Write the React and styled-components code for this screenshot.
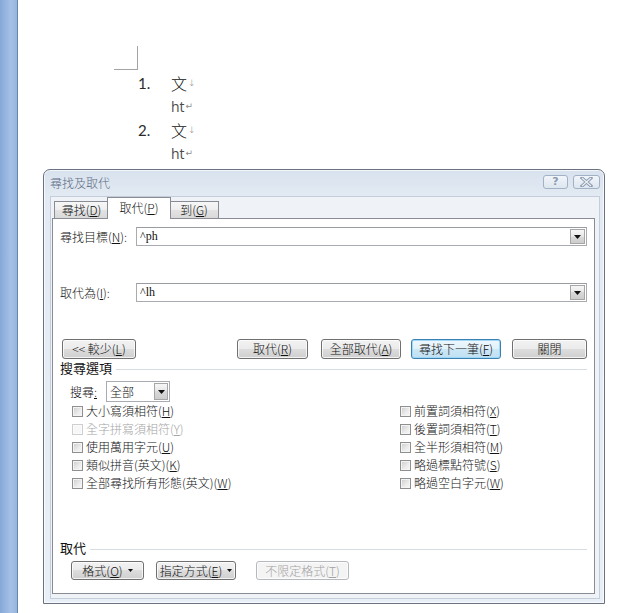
import React from "react";
import styled, { createGlobalStyle } from "styled-components";

const GlobalStyle = createGlobalStyle`
  html, body {
    margin: 0;
    padding: 0;
    background: #fff;
  }
  body {
    font-family: "Noto Sans CJK TC", "Noto Sans", sans-serif;
    font-size: 12px;
    font-weight: 300;
    color: #111;
  }
`;

const Screen = styled.div`
  display: flex;
  width: 626px;
  height: 613px;
  overflow: hidden;
  background: #fff;
`;

const WordRail = styled.div`
  width: 17px;
  flex: none;
  background: linear-gradient(to right, #86a8d8, #a6c1e7 65%, #97b4de);
  border-right: 1px solid #6585b3;
`;

const Page = styled.div`
  flex: 1;
  display: flex;
  flex-direction: column;
  padding-top: 46px;
`;

const CropMark = styled.div`
  margin-left: 96px;
  width: 24px;
  height: 24px;
  box-sizing: border-box;
  border-right: 1px solid #a4a4a4;
  border-bottom: 1px solid #a4a4a4;
`;

const DocList = styled.div`
  margin-top: 1px;
  padding-left: 120px;
  display: grid;
  grid-template-columns: 33px auto;
  grid-auto-rows: 23.5px;
  align-items: center;
`;

const Num = styled.span`
  font-family: Lato, "Liberation Sans", sans-serif;
  font-weight: 400;
  font-size: 15px;
  color: #2b2b2b;
`;

const Body = styled.span`
  display: flex;
  align-items: center;
  font-family: ${(p) => (p.$cjk ? '"Noto Sans CJK TC", sans-serif' : '"Open Sans", "Liberation Sans", sans-serif')};
  font-weight: ${(p) => (p.$cjk ? 300 : 400)};
  font-size: ${(p) => (p.$cjk ? "16px" : "14px")};
  color: ${(p) => (p.$cjk ? "#111" : "#4a4a4a")};
`;

const Mark = styled.span`
  font-family: "DejaVu Sans", sans-serif;
  font-size: 9px;
  color: #8a8a8a;
  margin-left: 1px;
`;

const Dialog = styled.div`
  margin: 4px 0 0 25px;
  width: 562px;
  height: 435px;
  box-sizing: border-box;
  display: flex;
  flex-direction: column;
  padding: 0 4px 4px 6px;
  border: 1px solid #69727e;
  border-radius: 7px 7px 0 0;
  background: linear-gradient(#d8e2ee, #e3eaf3 28px, #e9eff7);
  box-shadow: inset 0 0 0 1px rgba(255, 255, 255, 0.7);
`;

const TitleBar = styled.div`
  height: 26px;
  display: flex;
  align-items: flex-start;
`;

const Title = styled.div`
  margin-top: 6px;
  line-height: 13px;
  font-size: 12px;
  color: #5b6b80;
`;

const CaptionButtons = styled.div`
  margin-left: auto;
  margin-top: 5px;
  display: flex;
  gap: 5px;
`;

const CapBtn = styled.div`
  width: ${(p) => p.$w}px;
  height: 14px;
  box-sizing: border-box;
  border: 1px solid #a2b1c5;
  border-radius: 3px;
  background: linear-gradient(#f2f6fa, #dde5ef);
  display: flex;
  align-items: center;
  justify-content: center;
  font-family: "DejaVu Sans", sans-serif;
  font-weight: bold;
  font-size: 11px;
  line-height: 12px;
  color: #8b9bb0;
`;

const Client = styled.div`
  flex: 1;
  display: flex;
  flex-direction: column;
  border: 1px solid #c4cedb;
  background: #eff2f6;
  padding: 0 4px 4px 1px;
`;

const TabStrip = styled.div`
  height: 21px;
  display: flex;
  align-items: flex-end;
  padding-left: 2px;
`;

const Tab = styled.div`
  width: ${(p) => p.$w}px;
  height: ${(p) => (p.$active ? 22 : 17)}px;
  box-sizing: border-box;
  border: 1px solid #898c95;
  border-bottom: none;
  margin: 0 ${(p) => (p.$active ? -2 : 0)}px ${(p) => (p.$active ? -1 : 0)}px;
  position: relative;
  z-index: ${(p) => (p.$active ? 1 : 0)};
  background: ${(p) =>
    p.$active ? "#fff" : "linear-gradient(#f7f7f7, #eeeeee 50%, #e3e3e3 50%, #d9d9d9)"};
  display: flex;
  align-items: center;
  justify-content: center;
  font-size: 12px;
  line-height: 14px;
  padding-bottom: ${(p) => (p.$active ? 2 : 0)}px;
`;

const Panel = styled.div`
  flex: 1;
  display: flex;
  flex-direction: column;
  background: #fff;
  border: 1px solid #898c95;
  padding: 8px 7px 0 7px;
`;

const FieldRow = styled.div`
  margin-top: ${(p) => p.$mt || 0}px;
  display: flex;
  align-items: center;
`;

const FieldLabel = styled.div`
  width: 76px;
  flex: none;
  font-size: 12px;
  line-height: 14px;
`;

const Combo = styled.div`
  flex: 1;
  height: 19px;
  box-sizing: border-box;
  border: 1px solid #a9abb2;
  border-top-color: #9a9ca3;
  display: flex;
  align-items: center;
  padding-left: 3px;
  font-family: "Liberation Serif", serif;
  font-weight: 400;
  font-size: 12px;
`;

const ComboValue = styled.span`
  flex: 1;
`;

const DropBtn = styled.div`
  width: ${(p) => p.$w || 15}px;
  height: ${(p) => p.$h || 15}px;
  box-sizing: border-box;
  margin-right: 1px;
  border: 1px solid #a6a6a6;
  background: linear-gradient(#f7f7f7, #e6e6e6 50%, #d9d9d9 50%, #cdcdcd);
  display: flex;
  align-items: center;
  justify-content: center;
`;

const ButtonRow = styled.div`
  margin-top: ${(p) => p.$mt || 0}px;
  display: flex;
  align-items: center;
  padding-left: ${(p) => p.$indent || 0}px;
`;

const Spacer = styled.div`
  flex: 1;
`;

const Btn = styled.div`
  width: ${(p) => p.$w}px;
  height: ${(p) => p.$h || 20}px;
  margin-left: ${(p) => p.$ml || 0}px;
  box-sizing: border-box;
  border: 1px solid ${(p) => (p.$default ? "#3c7fb1" : p.$disabled ? "#b5b9bd" : "#707070")};
  border-radius: 3px;
  background: ${(p) =>
    p.$default
      ? "linear-gradient(#eef7fc, #e2f1fa 50%, #cde7f6 50%, #bfe0f3)"
      : p.$disabled
      ? "#f4f4f4"
      : "linear-gradient(#f2f2f2, #ebebeb 50%, #dddddd 50%, #cfcfcf)"};
  box-shadow: inset 0 0 0 1px ${(p) => (p.$default ? "#9fd9f7" : "rgba(255,255,255,0.75)")};
  color: ${(p) => (p.$disabled ? "#a2a2a2" : "#111")};
  display: flex;
  align-items: center;
  justify-content: center;
  gap: 5px;
  font-size: 12px;
  line-height: 14px;
  white-space: nowrap;
`;

const GroupHeader = styled.div`
  margin-top: ${(p) => p.$mt || 0}px;
  height: 14px;
  display: flex;
  align-items: center;
  gap: 4px;
`;

const GroupTitle = styled.span`
  font-size: 13px;
  font-weight: 400;
  line-height: 14px;
  color: #111;
`;

const GroupLine = styled.div`
  flex: 1;
  height: 1px;
  margin-top: 2px;
  background: #d6dde3;
`;

const SearchRow = styled.div`
  margin-top: 6px;
  padding-left: 10px;
  display: flex;
  align-items: center;
  gap: 6px;
`;

const SearchLabel = styled.span`
  width: 30px;
  font-size: 12px;
  line-height: 14px;
`;

const Select = styled.div`
  width: 64px;
  height: 21px;
  box-sizing: border-box;
  border: 1px solid #a9abb2;
  display: flex;
  align-items: center;
  padding-left: 3px;
  font-size: 12px;
`;

const CheckGrid = styled.div`
  padding-left: 12px;
  display: grid;
  grid-template-columns: 328px 1fr;
  grid-auto-flow: column;
  grid-template-rows: repeat(5, 18px);
`;

const CheckItem = styled.div`
  display: flex;
  align-items: center;
  gap: 3px;
  font-size: 12px;
  line-height: 14px;
  color: ${(p) => (p.$disabled ? "#a5a5a5" : "#151515")};
`;

const Box = styled.span`
  width: 11px;
  height: 11px;
  box-sizing: border-box;
  border: 1px solid ${(p) => (p.$disabled ? "#cfcfcf" : "#8e8f8f")};
  background: ${(p) =>
    p.$disabled ? "#f7f7f7" : "linear-gradient(135deg, #cbcbcb, #ececec 60%, #f8f8f8)"};
  box-shadow: inset 0 0 0 1px ${(p) => (p.$disabled ? "#fbfbfb" : "#f4f4f4")};
`;

const Caret = ({ w = 7, h = 4 }) => (
  <svg width={w} height={h} viewBox={`0 0 ${w} ${h}`}>
    <polygon points={`0,0 ${w},0 ${w / 2},${h}`} fill="#111" />
  </svg>
);

const CloseGlyph = () => (
  <svg width="13" height="10" viewBox="0 0 13 10">
    <path d="M2 1 L11 9 M11 1 L2 9" stroke="#8b9bb0" strokeWidth="3.2" strokeLinecap="square" />
    <path d="M2 1 L11 9 M11 1 L2 9" stroke="#eef2f7" strokeWidth="1.2" />
  </svg>
);

const Key = ({ k }) => (
  <>
    (<u>{k}</u>)
  </>
);

const leftChecks = [
  ["大小寫須相符", "H"],
  ["全字拼寫須相符", "Y", true],
  ["使用萬用字元", "U"],
  ["類似拼音(英文)", "K"],
  ["全部尋找所有形態(英文)", "W"],
];

const rightChecks = [
  ["前置詞須相符", "X"],
  ["後置詞須相符", "T"],
  ["全半形須相符", "M"],
  ["略過標點符號", "S"],
  ["略過空白字元", "W"],
];

export default function App() {
  return (
    <Screen>
      <GlobalStyle />
      <WordRail />
      <Page>
        <CropMark />
        <DocList>
          <Num>1.</Num>
          <Body $cjk>
            文<Mark>↓</Mark>
          </Body>
          <span />
          <Body>
            ht<Mark>↵</Mark>
          </Body>
          <Num>2.</Num>
          <Body $cjk>
            文<Mark>↓</Mark>
          </Body>
          <span />
          <Body>
            ht<Mark>↵</Mark>
          </Body>
        </DocList>

        <Dialog>
          <TitleBar>
            <Title>尋找及取代</Title>
            <CaptionButtons>
              <CapBtn $w={25}>?</CapBtn>
              <CapBtn $w={27}>
                <CloseGlyph />
              </CapBtn>
            </CaptionButtons>
          </TitleBar>
          <Client>
            <TabStrip>
              <Tab $w={55}>
                <span>
                  尋找<Key k="D" />
                </span>
              </Tab>
              <Tab $w={64} $active>
                <span>
                  取代<Key k="P" />
                </span>
              </Tab>
              <Tab $w={50}>
                <span>
                  到<Key k="G" />
                </span>
              </Tab>
            </TabStrip>
            <Panel>
              <FieldRow>
                <FieldLabel>
                  尋找目標<Key k="N" />:
                </FieldLabel>
                <Combo>
                  <ComboValue>^ph</ComboValue>
                  <DropBtn>
                    <Caret />
                  </DropBtn>
                </Combo>
              </FieldRow>
              <FieldRow $mt={37}>
                <FieldLabel>
                  取代為<Key k="I" />:
                </FieldLabel>
                <Combo>
                  <ComboValue>^lh</ComboValue>
                  <DropBtn>
                    <Caret />
                  </DropBtn>
                </Combo>
              </FieldRow>

              <ButtonRow $mt={37} $indent={2}>
                <Btn $w={74}>
                  <span>
                    &lt;&lt; 較少<Key k="L" />
                  </span>
                </Btn>
                <Spacer />
                <Btn $w={71}>
                  <span>
                    取代<Key k="R" />
                  </span>
                </Btn>
                <Btn $w={80} $ml={13}>
                  <span>
                    全部取代<Key k="A" />
                  </span>
                </Btn>
                <Btn $w={90} $ml={10} $default>
                  <span>
                    尋找下一筆<Key k="F" />
                  </span>
                </Btn>
                <Btn $w={75} $ml={11}>
                  <span>關閉</span>
                </Btn>
              </ButtonRow>

              <GroupHeader $mt={2}>
                <GroupTitle>搜尋選項</GroupTitle>
                <GroupLine />
              </GroupHeader>

              <SearchRow>
                <SearchLabel>
                  搜尋<u>:</u>
                </SearchLabel>
                <Select>
                  <ComboValue>全部</ComboValue>
                  <DropBtn $w={14} $h={17}>
                    <Caret />
                  </DropBtn>
                </Select>
              </SearchRow>

              <CheckGrid>
                {leftChecks.map(([t, k, d]) => (
                  <CheckItem key={t} $disabled={d}>
                    <Box $disabled={d} />
                    <span>
                      {t}
                      <Key k={k} />
                    </span>
                  </CheckItem>
                ))}
                {rightChecks.map(([t, k]) => (
                  <CheckItem key={t}>
                    <Box />
                    <span>
                      {t}
                      <Key k={k} />
                    </span>
                  </CheckItem>
                ))}
              </CheckGrid>

              <GroupHeader $mt={49}>
                <GroupTitle>取代</GroupTitle>
                <GroupLine />
              </GroupHeader>

              <ButtonRow $mt={6} $indent={11}>
                <Btn $w={73} $h={19}>
                  <span>
                    格式<Key k="O" />
                  </span>
                  <Caret w={5} h={3} />
                </Btn>
                <Btn $w={80} $h={19} $ml={12}>
                  <span>
                    指定方式<Key k="E" />
                  </span>
                  <Caret w={5} h={3} />
                </Btn>
                <Btn $w={93} $h={19} $ml={20} $disabled>
                  <span>
                    不限定格式<Key k="T" />
                  </span>
                </Btn>
              </ButtonRow>
            </Panel>
          </Client>
        </Dialog>
      </Page>
    </Screen>
  );
}
